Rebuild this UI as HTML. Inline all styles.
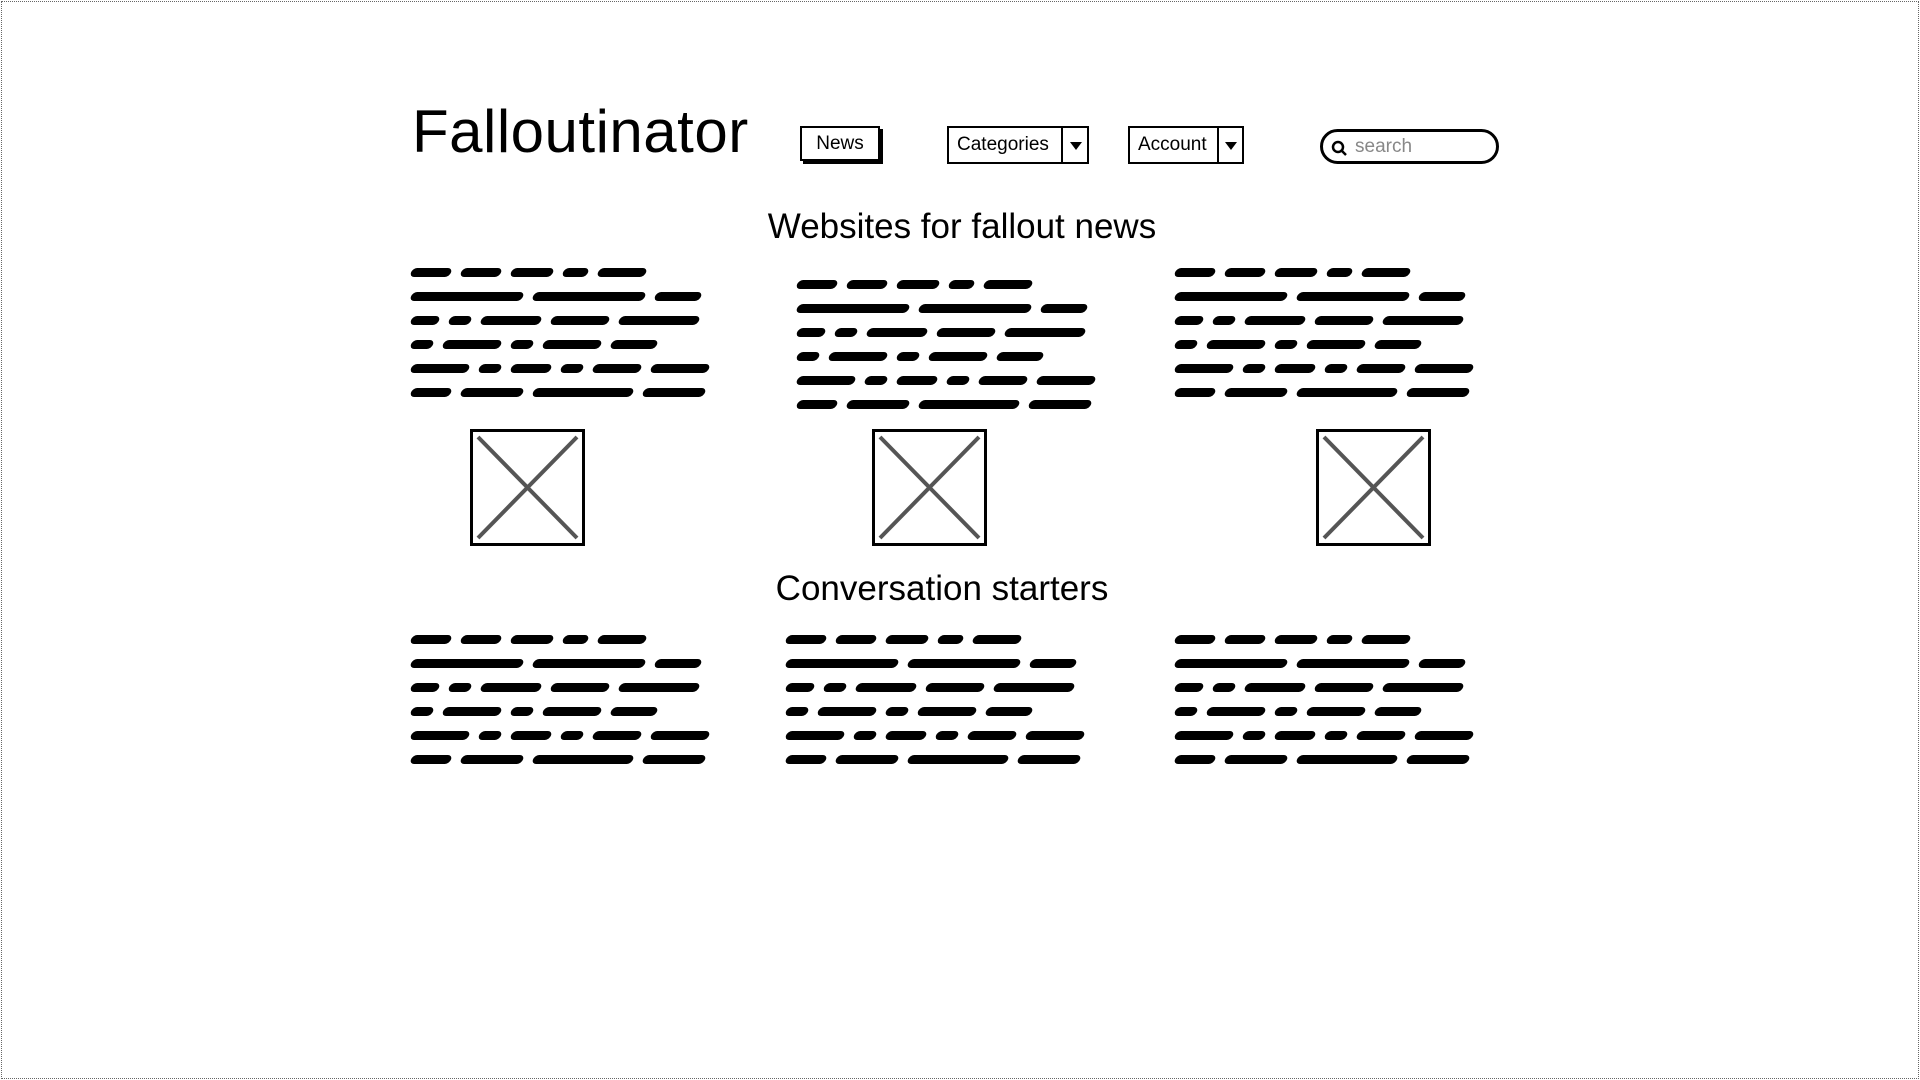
<!DOCTYPE html>
<html><head><meta charset="utf-8"><style>
body{margin:0;width:1920px;height:1080px;background:#fff;position:relative;overflow:hidden;font-family:"Liberation Sans",sans-serif;color:#000}
.frame{position:absolute;left:1px;top:1px;width:1916px;height:1076px;border:1px dotted #666}
.abs{position:absolute}
.title{left:412px;top:97px;font-size:60px;letter-spacing:0.5px}
.btn{position:absolute;border:2px solid #000;background:#fff;font-size:19px;box-sizing:border-box;display:flex;align-items:center}
.h{font-size:35px;white-space:nowrap;transform:translateX(-50%)}
.col{position:absolute;width:320px}
.ln{height:24px;display:flex;gap:10px;align-items:center}
.ln i{display:block;height:9px;background:#000;border-radius:5px;transform:skewX(-20deg)}
.img{position:absolute;width:115px;height:117px;border:3px solid #000;box-sizing:border-box}
</style></head><body>
<div class="frame"></div>
<div class="abs title">Falloutinator</div>

<div class="btn" style="left:800px;top:126px;width:80px;height:35px;justify-content:center;box-shadow:3px 3px 0 #000">News</div>
<div class="btn" style="left:947px;top:126px;width:142px;height:38px;padding-left:8px">Categories<div style="position:absolute;left:112px;top:0;bottom:0;border-left:2px solid #000;width:26px"><div style="position:absolute;left:7px;top:14px;border-left:6px solid transparent;border-right:6px solid transparent;border-top:8px solid #000"></div></div></div>
<div class="btn" style="left:1128px;top:126px;width:116px;height:38px;padding-left:8px">Account<div style="position:absolute;left:87px;top:0;bottom:0;border-left:2px solid #000;width:25px"><div style="position:absolute;left:6px;top:14px;border-left:6px solid transparent;border-right:6px solid transparent;border-top:8px solid #000"></div></div></div>
<div class="btn" style="left:1320px;top:129px;width:179px;height:35px;border-radius:18px;border-width:3px;padding-left:32px;color:#888;font-size:19px">search
<svg style="position:absolute;left:8px;top:8px" width="18" height="18" viewBox="0 0 18 18"><circle cx="7" cy="7" r="5" fill="none" stroke="#000" stroke-width="2.5"/><line x1="10.5" y1="10.5" x2="15" y2="15" stroke="#000" stroke-width="2.5"/></svg></div>

<div class="abs h" style="left:962px;top:207px">Websites for fallout news</div>
<div class="abs h" style="left:942px;top:569px">Conversation starters</div>

<div class="col" style="left:411px;top:260px" id="c1"></div>
<div class="col" style="left:797px;top:272px" id="c2"></div>
<div class="col" style="left:1175px;top:260px" id="c3"></div>
<div class="col" style="left:411px;top:627px" id="c4"></div>
<div class="col" style="left:786px;top:627px" id="c5"></div>
<div class="col" style="left:1175px;top:627px" id="c6"></div>

<div class="img" style="left:470px;top:429px"><svg width="109" height="111" style="display:block"><line x1="5" y1="5" x2="104" y2="106" stroke="#555" stroke-width="4"/><line x1="104" y1="5" x2="5" y2="106" stroke="#555" stroke-width="4"/></svg></div>
<div class="img" style="left:872px;top:429px"><svg width="109" height="111" style="display:block"><line x1="5" y1="5" x2="104" y2="106" stroke="#555" stroke-width="4"/><line x1="104" y1="5" x2="5" y2="106" stroke="#555" stroke-width="4"/></svg></div>
<div class="img" style="left:1316px;top:429px"><svg width="109" height="111" style="display:block"><line x1="5" y1="5" x2="104" y2="106" stroke="#555" stroke-width="4"/><line x1="104" y1="5" x2="5" y2="106" stroke="#555" stroke-width="4"/></svg></div>

<script>
var L=[[40,40,42,25,48],[112,112,46],[28,22,60,58,80],[22,58,22,58,46],[58,22,40,22,48,58],[40,62,100,62]];
var h='';L.forEach(function(r){h+='<div class="ln">'+r.map(function(w){return '<i style="width:'+w+'px"></i>'}).join('')+'</div>'});
['c1','c2','c3','c4','c5','c6'].forEach(function(id){document.getElementById(id).innerHTML=h});
</script>
</body></html>
